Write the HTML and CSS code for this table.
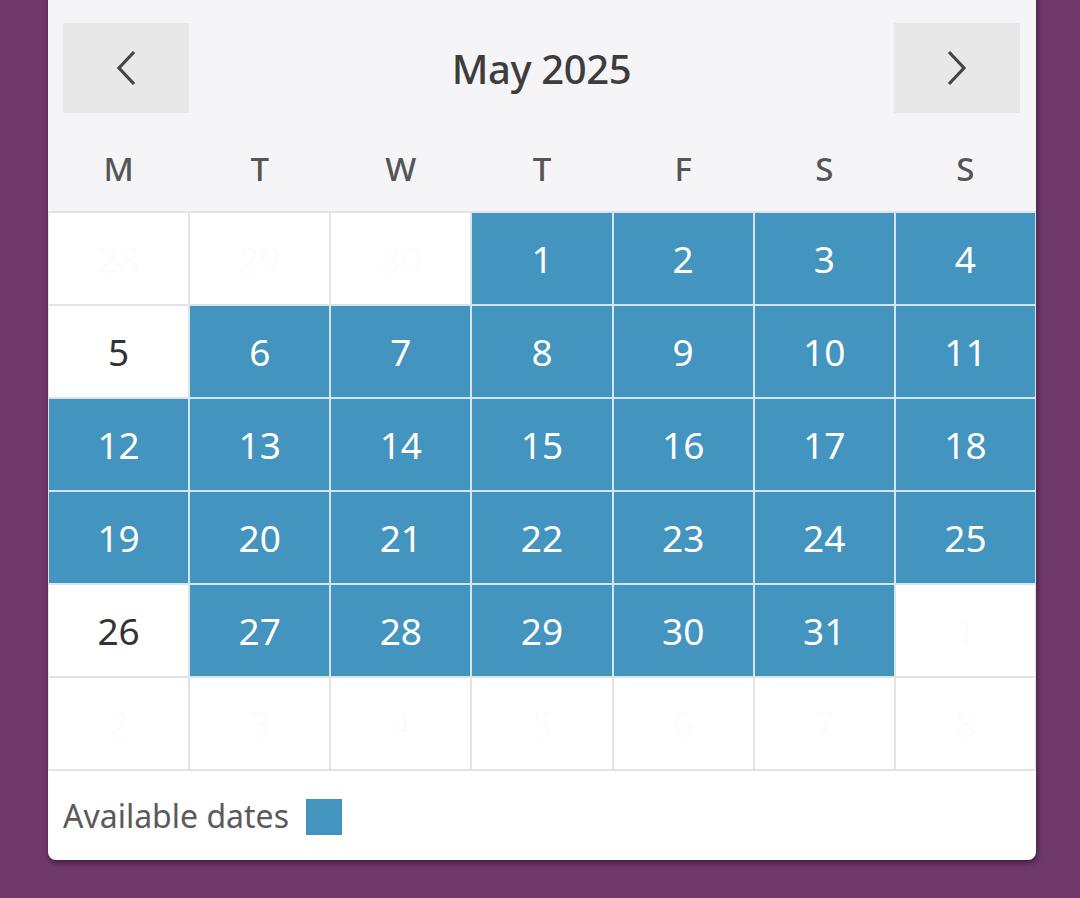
FILE: index.html
```html
<!DOCTYPE html>
<html lang="en">
<head>
<meta charset="utf-8">
<title>May 2025</title>
<link rel="stylesheet" href="styles.css">
</head>
<body>
<div class="card">
  <div class="head">
    <div class="nav">
      <button class="navbtn" aria-label="Previous month">
        <svg width="24" height="36" viewBox="0 0 24 36"><path d="M20 2 L5 18 L20 34" fill="none" stroke="#454545" stroke-width="3.2"/></svg>
      </button>
      <div class="title">May 2025</div>
      <button class="navbtn" aria-label="Next month">
        <svg width="24" height="36" viewBox="0 0 24 36"><path d="M4 2 L19 18 L4 34" fill="none" stroke="#454545" stroke-width="3.2"/></svg>
      </button>
    </div>
    <div class="weekdays">
      <div>M</div><div>T</div><div>W</div><div>T</div><div>F</div><div>S</div><div>S</div>
    </div>
  </div>
  <div class="grid">
    <div class="cell other">28</div><div class="cell other">29</div><div class="cell other">30</div>
    <div class="cell avail">1</div><div class="cell avail">2</div><div class="cell avail">3</div><div class="cell avail">4</div>
    <div class="cell">5</div><div class="cell avail">6</div><div class="cell avail">7</div><div class="cell avail">8</div><div class="cell avail">9</div><div class="cell avail">10</div><div class="cell avail">11</div>
    <div class="cell avail">12</div><div class="cell avail">13</div><div class="cell avail">14</div><div class="cell avail">15</div><div class="cell avail">16</div><div class="cell avail">17</div><div class="cell avail">18</div>
    <div class="cell avail">19</div><div class="cell avail">20</div><div class="cell avail">21</div><div class="cell avail">22</div><div class="cell avail">23</div><div class="cell avail">24</div><div class="cell avail">25</div>
    <div class="cell">26</div><div class="cell avail">27</div><div class="cell avail">28</div><div class="cell avail">29</div><div class="cell avail">30</div><div class="cell avail">31</div><div class="cell other">1</div>
    <div class="cell other">2</div><div class="cell other">3</div><div class="cell other">4</div><div class="cell other">5</div><div class="cell other">6</div><div class="cell other">7</div><div class="cell other">8</div>
  </div>
  <div class="legend">
    <span class="legend-label">Available dates</span>
    <span class="swatch"></span>
  </div>
</div>
</body>
</html>
```

FILE: styles.css
```css
html, body {
  margin: 0;
  padding: 0;
  background: #6f3a6b;
  height: 100%;
  overflow: hidden;
}
body {
  font-family: "Noto Sans", "Open Sans", sans-serif;
}
.card {
  margin: -10px 44px 0 48px;
  width: 988px;
  background: #ffffff;
  border-radius: 8px;
  box-shadow: 1px 3px 6px rgba(30, 0, 30, 0.55);
  overflow: hidden;
}
.head {
  background: #f5f5f7;
  padding-top: 33px;
  border-bottom: 1px solid #e3e3e3;
}
.nav {
  display: flex;
  align-items: center;
  justify-content: space-between;
  padding: 0 16px 0 15px;
  height: 90px;
}
.navbtn {
  width: 126px;
  height: 90px;
  border: none;
  background: #e8e8e8;
  display: flex;
  align-items: center;
  justify-content: center;
  padding: 0;
  margin: 0;
}
.title {
  font-size: 40px;
  font-weight: 500;
  color: #3d3d3d;
  letter-spacing: -0.4px;
}
.weekdays {
  display: grid;
  grid-template-columns: repeat(7, 1fr);
  padding-top: 13px;
  height: 85px;
}
.weekdays div {
  text-align: center;
  line-height: 85px;
  font-size: 33px;
  font-weight: 500;
  color: #555555;
}
.grid {
  display: grid;
  grid-template-columns: repeat(7, 1fr);
}
.cell {
  height: 91px;
  border: 1px solid #e3e3e3;
  display: flex;
  align-items: center;
  justify-content: center;
  font-size: 37px;
  color: #333333;
}
.cell.other {
  color: #fcfcfc;
}
.cell.avail {
  background: #4394bf;
  border-color: #d3e5ef;
  color: #ffffff;
}
.legend {
  border-top: 1px solid #e3e3e3;
  height: 89px;
  display: flex;
  align-items: center;
  padding-left: 15px;
  gap: 17px;
}
.legend-label {
  font-size: 32px;
  color: #5a5a5a;
}
.swatch {
  width: 36px;
  height: 36px;
  background: #4394bf;
  margin-top: 2px;
}
```
